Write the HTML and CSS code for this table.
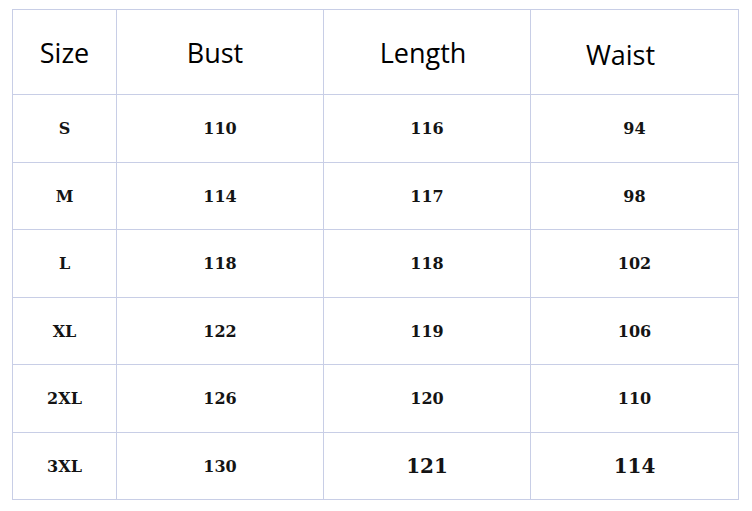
FILE: index.html
```html
<!DOCTYPE html>
<html>
<head>
<meta charset="utf-8">
<link rel="stylesheet" href="styles.css">
</head>
<body>
<div class="chart">
  <div class="cell head">Size</div>
  <div class="cell head h-bust">Bust</div>
  <div class="cell head h-len">Length</div>
  <div class="cell head h-waist">Waist</div>

  <div class="cell">S</div><div class="cell">110</div><div class="cell">116</div><div class="cell">94</div>
  <div class="cell">M</div><div class="cell">114</div><div class="cell">117</div><div class="cell">98</div>
  <div class="cell">L</div><div class="cell">118</div><div class="cell">118</div><div class="cell">102</div>
  <div class="cell">XL</div><div class="cell">122</div><div class="cell">119</div><div class="cell">106</div>
  <div class="cell">2XL</div><div class="cell">126</div><div class="cell">120</div><div class="cell">110</div>
  <div class="cell">3XL</div><div class="cell">130</div><div class="cell big">121</div><div class="cell big">114</div>
</div>
</body>
</html>
```
FILE: styles.css
```css
html, body {
  margin: 0;
  padding: 0;
  background: #ffffff;
}
.chart {
  margin: 9px 0 0 12px;
  display: grid;
  grid-template-columns: 104px 207px 207px 208px;
  grid-template-rows: 85px 68px 67px 68px 67px 68px 67px;
  border-top: 1px solid #c8cee6;
  border-left: 1px solid #c8cee6;
  width: max-content;
}
.cell {
  border-right: 1px solid #c8cee6;
  border-bottom: 1px solid #c8cee6;
  display: flex;
  align-items: center;
  justify-content: center;
  font-family: "DejaVu Serif", serif;
  font-weight: bold;
  font-size: 16px;
  color: #141414;
}
.head {
  font-family: "Open Sans", "Noto Sans", sans-serif;
  font-weight: normal;
  font-size: 27px;
  color: #000;
}
.h-bust { padding-right: 10px; }
.h-len { padding-right: 8px; }
.h-waist { padding-right: 28px; padding-top: 4px; }
.big { font-size: 20px; }
```
